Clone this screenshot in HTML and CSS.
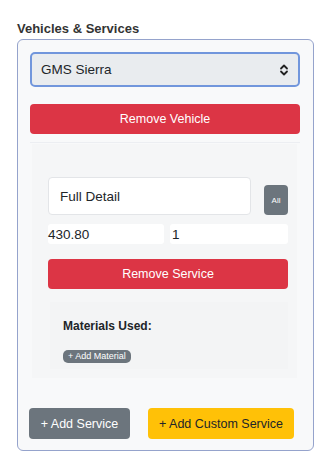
FILE: index.html
```html
<!DOCTYPE html>
<html lang="en">
<head>
  <meta charset="UTF-8">
  <meta name="viewport" content="width=device-width, initial-scale=1.0">
  <title>Vehicles &amp; Services</title>
  <link rel="stylesheet" href="styles.css">
</head>
<body>
  <h2 class="section-title">Vehicles &amp; Services</h2>
  <div class="vehicles">
    <div class="vehicle-select">
      <span>GMS Sierra</span>
      <svg class="chevrons" width="10" height="12" viewBox="0 0 10 12"><path d="M2 4.5 L5 1.5 L8 4.5 M2 7.5 L5 10.5 L8 7.5" fill="none" stroke="#222" stroke-width="1.8" stroke-linecap="round" stroke-linejoin="round"/></svg>
    </div>
    <button class="btn btn-danger btn-wide">Remove Vehicle</button>
    <div class="divider"></div>
    <div class="service">
      <div class="service-row">
        <div class="input service-name">Full Detail</div>
        <button class="btn btn-secondary btn-all">All</button>
      </div>
      <div class="price-row">
        <div class="input-plain price">430.80</div>
        <div class="input-plain qty">1</div>
      </div>
      <button class="btn btn-danger btn-wide btn-service">Remove Service</button>
      <div class="materials">
        <h4>Materials Used:</h4>
        <button class="btn btn-secondary btn-tiny">+ Add Material</button>
      </div>
    </div>
    <div class="actions">
      <button class="btn btn-secondary btn-action btn-add">+ Add Service</button>
      <button class="btn btn-warning btn-action btn-custom">+ Add Custom Service</button>
    </div>
  </div>
</body>
</html>
```

FILE: styles.css
```css
body { margin: 0; padding: 21px 21px 6px 17px; font-family: "Liberation Sans", Arial, sans-serif; color: #212529; background: #fff; }
.section-title { margin: 0 0 3px; font-size: 13px; font-weight: bold; line-height: 15px; color: #333; }
.vehicles { border: 1px solid #95a3cc; border-radius: 6px; background: #f8f9fa; padding: 12px 13px 11px 12px; }
.vehicle-select { display: flex; align-items: center; justify-content: space-between; height: 31px; padding: 0 8px 0 9px; border: 2px solid #7196dc; border-radius: 5px; background: #e9ecef; font-size: 13.5px; }
.chevrons { margin-right: 1px; }
.btn { border: none; border-radius: 4px; font-family: inherit; cursor: pointer; padding: 0; white-space: nowrap; }
.btn-danger { background: #dc3545; color: #fff; }
.btn-secondary { background: #6c757d; color: #fff; }
.btn-warning { background: #ffc107; color: #212529; }
.btn-wide { display: block; width: 100%; height: 30px; font-size: 12.5px; margin-top: 17px; }
.divider { height: 1px; background: #eceef2; margin: 8px 0 0; }
.service { background: #f5f6f7; margin: 1px 3px 0 2px; padding: 33px 9px 9px 16px; }
.service-row { display: flex; align-items: flex-end; gap: 13px; }
.input { flex: 1; height: 38px; box-sizing: border-box; padding: 0 11px; display: flex; align-items: center; background: #fff; border: 1px solid #e3e5e8; border-radius: 4px; font-size: 13.5px; }
.btn-all { width: 24px; height: 30px; font-size: 8px; border-radius: 4px; }
.price-row { display: flex; gap: 6px; margin-top: 9px; }
.input-plain { height: 20px; background: #fff; font-size: 13.5px; display: flex; align-items: center; border-radius: 3px; }
.price { width: 116px; }
.qty { flex: 1; padding-left: 2px; }
.btn-service { margin-top: 15px; }
.materials { margin: 13px 0 0 2px; padding: 17px 13px 6px; background: #f3f4f5; }
.materials h4 { margin: 0 0 12px; font-size: 12px; font-weight: bold; line-height: 14px; }
.btn-tiny { height: 13px; padding: 0 5px; font-size: 9px; border-radius: 5px; line-height: 13px; }
.actions { display: flex; gap: 18px; margin-top: 30px; margin-left: -1px; }
.btn-action { height: 31px; font-size: 12.5px; }
.btn-add { width: 101px; }
.btn-custom { width: 146px; }
```
